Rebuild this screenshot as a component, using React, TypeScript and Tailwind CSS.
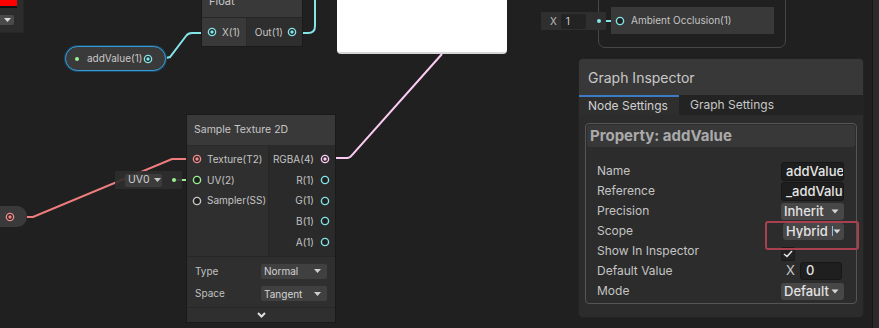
import React from "react";

const F = { fontFamily: "Inter, 'Noto Sans', sans-serif" };

function Port({ color, filled = false }: { color: string; filled?: boolean }) {
  return (
    <svg width="10" height="10" viewBox="0 0 10 10" className="shrink-0">
      <circle cx="5" cy="5" r="3.6" fill="#202020" stroke={color} strokeWidth="1.4" />
      {filled && <circle cx="5" cy="5" r="1.7" fill={color} />}
    </svg>
  );
}

function Tri() {
  return (
    <svg width="8" height="5" viewBox="0 0 8 5" className="shrink-0">
      <path d="M0.5 0.5 L7.5 0.5 L4 4.5 Z" fill="#d8d8d8" />
    </svg>
  );
}

function Dropdown({ text, w = "w-[63px]", pr = "pr-[5px]" }: { text: string; w?: string; pr?: string }) {
  return (
    <div className={`${w} h-[17px] rounded-[3px] bg-[#474747] flex items-center pl-[3px] ${pr} overflow-hidden`}>
      <span className="flex-1 overflow-hidden whitespace-nowrap text-[13px] font-medium text-[#e2e2e2] leading-none">{text}</span>
      <Tri />
    </div>
  );
}

function TextField({ text }: { text: string }) {
  return (
    <div className="w-[63px] h-[19px] rounded-[3px] bg-[#1e1e1e] border border-[#171717] flex items-center pl-[4px] overflow-hidden">
      <span className="whitespace-nowrap text-[13px] font-medium text-[#e6e6e6] leading-none">{text}</span>
    </div>
  );
}

function InspRow({ label, children }: { label: string; children?: React.ReactNode }) {
  return (
    <div className="h-[20px] flex items-center pl-[10px] pr-[11px]">
      <span className="flex-1 text-[12px] text-[#c4c4c4] whitespace-nowrap">{label}</span>
      <div className="w-[63px] flex items-center">{children}</div>
    </div>
  );
}

export default function App() {
  return (
    <div className="relative w-[879px] h-[328px] overflow-hidden bg-[#202020]" style={F}>
      {/* right strip */}
      <div className="absolute top-0 right-0 w-[7px] h-full bg-[#2b2b2b] border-l border-[#161616]" />

      {/* top-left partial node */}
      <div className="absolute left-0 top-0 w-[24px] h-[33px] bg-[#2c2c2c] border-r border-b border-[#262626] flex flex-col">
        <div className="w-[17px] h-[8px] bg-[#ff0000] border-b-2 border-[#111]" />
        <div className="mt-[7px] w-[14px] h-[10px] rounded-r-[2px] bg-[#4a4a4a] flex items-center justify-center">
          <svg width="7" height="4" viewBox="0 0 7 4"><path d="M0 0 L7 0 L3.5 4 Z" fill="#dcdcdc" /></svg>
        </div>
      </div>

      {/* wires */}
      <svg className="absolute inset-0" width="879" height="328" viewBox="0 0 879 328" fill="none">
        <path d="M166 58 L170 57 L186 36 Q188 33 192 33 L210 33" stroke="#84e4e7" strokeWidth="2" />
        <path d="M294 33 L308 33 Q315 33 315 26 L315 0" stroke="#84e4e7" strokeWidth="2" />
        <path d="M329 158 L347 158 Q350 158 352 155 L442 54" stroke="#fbcbf4" strokeWidth="2" />
        <path d="M27 217 L33 217 L172 159 L194 159" stroke="#f07d7d" strokeWidth="2" />
        <path d="M175 180 L194 180" stroke="#9aef92" strokeWidth="2" />
        <path d="M600 21 L616 21" stroke="#84e4e7" strokeWidth="2" />
      </svg>

      {/* white preview box */}
      <div className="absolute left-[337px] top-[-6px] w-[170px] h-[60px] bg-white rounded-[4px] border-b-2 border-[#d6d6d6]" />

      {/* Float node */}
      <div className="absolute left-[202px] top-[-15px] w-[100px] flex flex-col shadow-[0_0_0_1px_#1a1a1a]">
        <div className="h-[33px] bg-[#393939] flex items-center px-[7px] text-[11px] text-[#c8c8c8] border-b border-[#262626]">Float</div>
        <div className="h-[28px] flex">
          <div className="w-[45px] bg-[#393939] flex items-center gap-[5px] pl-[5px] border-r border-[#2a2a2a]">
            <Port color="#84e4e7" filled />
            <span className="text-[10px] text-[#c4c4c4]">X(1)</span>
          </div>
          <div className="flex-1 bg-[#2e2e2e] flex items-center justify-end gap-[4px] pr-[5px]">
            <span className="text-[10px] text-[#c4c4c4]">Out(1)</span>
            <Port color="#84e4e7" filled />
          </div>
        </div>
      </div>

      {/* addValue pill */}
      <div className="absolute left-[65px] top-[46px] w-[101px] h-[25px] rounded-full border-[1.5px] border-[#3a9bd9] bg-[#3a3a3a] flex items-center pl-[9px] pr-[12px] shadow-[0_0_0_1px_#1a4560]">
        <div className="w-[4px] h-[4px] rounded-full bg-[#9aef92]" />
        <span className="ml-[8px] flex-1 text-[10px] text-[#c8c8c8]">addValue(1)</span>
        <Port color="#84e4e7" filled />
      </div>

      {/* top right group */}
      <div className="absolute left-[598px] top-[-12px] w-[188px] h-[60px] rounded-[7px] border border-[#474747]" />
      <div className="absolute left-[541px] top-[12px] w-[65px] h-[18px] bg-[#2f2f2f] flex items-center pl-[9px]">
        <span className="text-[10px] text-[#bcbcbc]">X</span>
        <div className="ml-[4px] w-[25px] h-[15px] rounded-[2px] bg-[#232323] flex items-center pl-[5px] text-[10px] text-[#d0d0d0]">1</div>
        <div className="ml-[11px] w-[4px] h-[4px] rounded-full bg-[#84e4e7]" />
      </div>
      <div className="absolute left-[611px] top-[7px] w-[163px] h-[27px] bg-[#393939] flex items-center pl-[4px]">
        <Port color="#84e4e7" />
        <span className="ml-[6px] text-[10px] text-[#c4c4c4]">Ambient Occlusion(1)</span>
      </div>

      {/* UV0 node */}
      <div className="absolute left-[115px] top-[171px] w-[67px] h-[18px] bg-[#2e2e2e]/90 flex items-center pl-[10px]">
        <div className="w-[37px] h-[13px] rounded-[2px] bg-[#3c3c3c] flex items-center gap-[4px] pl-[3px] text-[10.5px] text-[#d0d0d0] leading-none">
          UV0
          <svg width="7" height="4" viewBox="0 0 7 4"><path d="M0 0 L7 0 L3.5 4 Z" fill="#c8c8c8" /></svg>
        </div>
        <div className="ml-[10px] w-[4px] h-[4px] rounded-full bg-[#9aef92]" />
      </div>

      {/* red pill bottom-left */}
      <div className="absolute left-0 top-[206px] w-[27px] h-[21px] rounded-r-[10px] bg-[#3a3a3a] flex items-center pl-[5px]">
        <Port color="#f08a8a" filled />
      </div>

      {/* Sample Texture 2D */}
      <div className="absolute left-[187px] top-[115px] w-[148px] flex flex-col shadow-[0_0_0_1px_#1a1a1a]">
        <div className="h-[31px] bg-[#393939] flex items-center px-[7px] text-[10.5px] text-[#c6c6c6] border-b border-[#2a2a2a]">Sample Texture 2D</div>
        <div className="flex h-[110px]">
          <div className="w-[82px] bg-[#2f2f2f] pt-[3px] pl-[5px] flex flex-col border-r border-[#262626]">
            {[
              { t: "Texture(T2)", c: "#f08a8a", f: true },
              { t: "UV(2)", c: "#9aef92", f: false },
              { t: "Sampler(SS)", c: "#c8c8c8", f: false },
            ].map((p) => (
              <div key={p.t} className="h-[20.7px] flex items-center gap-[5px]">
                <Port color={p.c} filled={p.f} />
                <span className="text-[10px] text-[#c4c4c4] whitespace-nowrap">{p.t}</span>
              </div>
            ))}
          </div>
          <div className="flex-1 bg-[#2a2a2a] pt-[3px] pr-[5px] flex flex-col">
            {[
              { t: "RGBA(4)", c: "#fbcbf4", f: true },
              { t: "R(1)", c: "#84e4e7", f: false },
              { t: "G(1)", c: "#84e4e7", f: false },
              { t: "B(1)", c: "#84e4e7", f: false },
              { t: "A(1)", c: "#84e4e7", f: false },
            ].map((p) => (
              <div key={p.t} className="h-[20.7px] flex items-center justify-end gap-[6px]">
                <span className="text-[10px] text-[#c4c4c4] whitespace-nowrap">{p.t}</span>
                <Port color={p.c} filled={p.f} />
              </div>
            ))}
          </div>
        </div>
        <div className="bg-[#2f2f2f] h-[51px] flex flex-col pt-[3px] pl-[8px] pr-[8px] border-t border-[#262626]">
          {[
            { l: "Type", v: "Normal" },
            { l: "Space", v: "Tangent" },
          ].map((r) => (
            <div key={r.l} className="h-[22.5px] flex items-center">
              <span className="flex-1 text-[10px] text-[#c0c0c0]">{r.l}</span>
              <div className="w-[66px] h-[15px] rounded-[2px] bg-[#404040] flex items-center pl-[3px] pr-[6px] text-[10px] text-[#d4d4d4] leading-none">
                <span className="flex-1">{r.v}</span>
                <svg width="7" height="4" viewBox="0 0 7 4"><path d="M0 0 L7 0 L3.5 4 Z" fill="#d0d0d0" /></svg>
              </div>
            </div>
          ))}
        </div>
        <div className="h-[15px] bg-[#2f2f2f] border-t border-[#262626] flex items-center justify-center">
          <svg width="9" height="6" viewBox="0 0 9 6"><path d="M1 1 L4.5 4.5 L8 1" stroke="#e0e0e0" strokeWidth="2" fill="none" /></svg>
        </div>
      </div>

      {/* Graph Inspector */}
      <div className="absolute left-[578px] top-[58px] w-[286px] h-[260px] rounded-[5px] bg-[#2c2c2c] flex flex-col overflow-hidden border border-[#232323]">
        <div className="h-[36px] bg-[#383838] flex items-center pl-[9px] text-[14px] text-[#c8c8c8]">Graph Inspector</div>
        <div className="h-[20px] bg-[#232323] flex">
          <div className="w-[100px] bg-[#2e2e2e] border-t-2 border-[#3b7cc4] flex items-center pl-[9px] text-[12px] text-[#d0d0d0]">Node Settings</div>
          <div className="flex items-center pl-[11px] text-[12px] text-[#c8c8c8]">Graph Settings</div>
        </div>
        <div className="mt-[8px] mx-[6px] h-[181px] rounded-[4px] border border-[#555555] p-[1px] flex flex-col">
          <div className="h-[22px] rounded-[3px] bg-[#383838] flex items-center pl-[3px] text-[15px] font-bold text-[#aaaaaa]">Property: addValue</div>
          <div className="mt-[14px] flex flex-col">
            <InspRow label="Name"><TextField text="addValue" /></InspRow>
            <InspRow label="Reference"><TextField text="_addValue" /></InspRow>
            <InspRow label="Precision"><Dropdown text="Inherit" /></InspRow>
            <InspRow label="Scope"><div className="pl-[2px]"><Dropdown text="Hybrid Per Instance" w="w-[61px]" pr="pr-[3px]" /></div></InspRow>
            <InspRow label="Show In Inspector">
              <div className="w-[14px] h-[14px] mt-[6px] rounded-[2px] bg-[#222222] border border-[#1a1a1a] flex items-center justify-center">
                <svg width="10" height="8" viewBox="0 0 10 8"><path d="M1 4 L4 6.5 L9 1" stroke="#e0e0e0" strokeWidth="1.6" fill="none" /></svg>
              </div>
            </InspRow>
            <InspRow label="Default Value">
              <div className="flex items-center pl-[5px] gap-[5px]">
                <span className="text-[13px] text-[#c8c8c8]">X</span>
                <div className="w-[42px] h-[18px] rounded-[3px] bg-[#1f1f1f] border border-[#171717] flex items-center pl-[5px] text-[13px] font-medium text-[#e0e0e0]">0</div>
              </div>
            </InspRow>
            <InspRow label="Mode"><Dropdown text="Default" /></InspRow>
          </div>
        </div>
      </div>

      {/* red highlight around Scope */}
      <div className="absolute left-[765px] top-[221px] w-[94px] h-[29px] rounded-[3px] border-2 border-[#a8404f]" />
    </div>
  );
}
